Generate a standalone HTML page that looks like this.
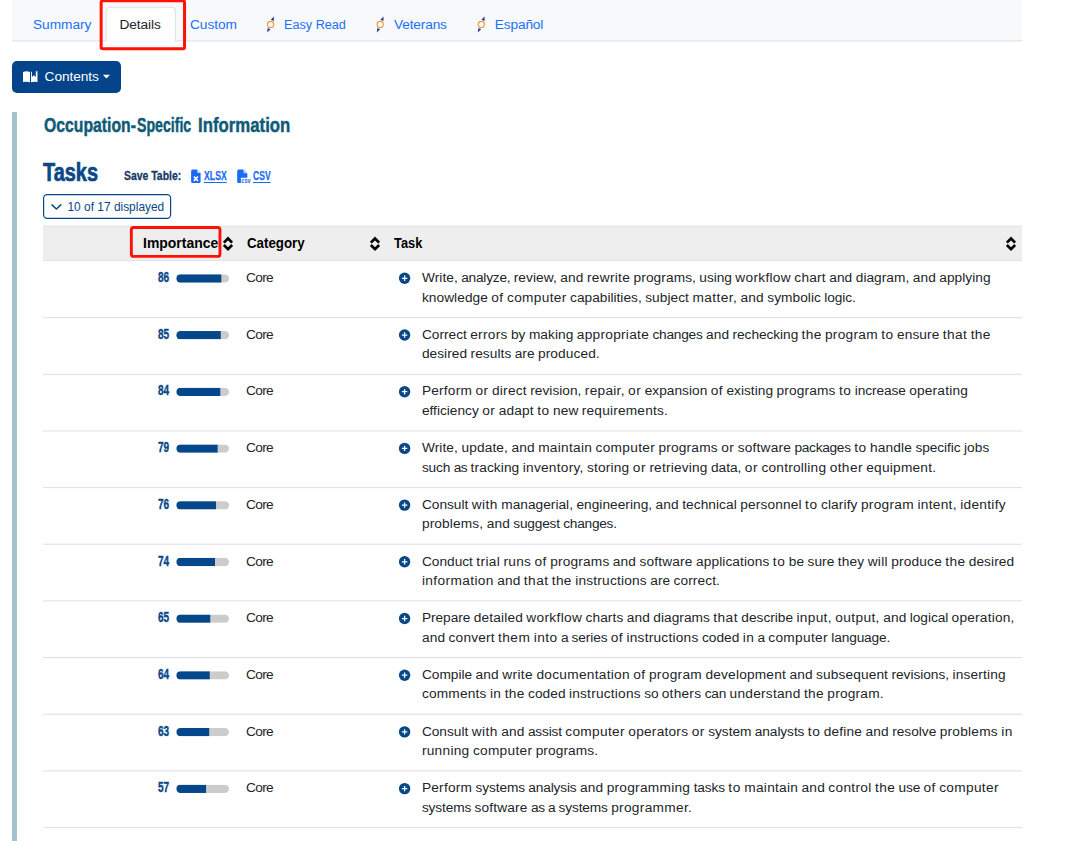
<!DOCTYPE html><html lang="en"><head><meta charset="utf-8"><title>Tasks</title><style>
*{box-sizing:border-box}
html,body{margin:0;padding:0;background:#fff}
h2,h3{margin:0;font-size:inherit;font-weight:inherit}
a{text-decoration:none}
body{width:1076px;height:841px;position:relative;overflow:hidden;font-family:"Liberation Sans",sans-serif;font-size:13.7px;color:#212529}
.abs{position:absolute;white-space:nowrap}
#tabbar{left:12px;top:0;width:1010px;height:41px;background:#f8f9fa}
.tab{top:16px;line-height:18px;color:#1a70fb}
#contents{left:12px;top:61px;width:109px;height:32px;background:#03448a;border-radius:5px}
#leftbar{left:12px;top:112px;width:5px;height:729px;background:#a3c3ce}
.cond{font-weight:bold;transform-origin:0 50%}
.h1{-webkit-text-stroke:.45px #0f5a77}
#h2{-webkit-text-stroke:.7px #084887}
#st{-webkit-text-stroke:.3px #173865}
#xl,#cs{-webkit-text-stroke:.25px #1b6af7}
.num{-webkit-text-stroke:.4px #084887}
#thead{left:43px;top:226px;width:979px;height:35px;background:#eeeeee}
.th{top:235px;font-weight:bold;font-size:14.3px;line-height:17px;color:#000;transform-origin:0 50%}
.num{font-weight:bold;color:#084887;font-size:14.3px;line-height:19px}
.task,.core{line-height:19px}
.task{height:19px}
.w{display:inline-block;white-space:pre;vertical-align:top;height:19px}
</style></head><body>
<div id="tabbar" class="abs"></div>
<svg class="abs" style="left:0;top:0" width="1076" height="56" viewBox="0 0 1076 56"><rect x="12" y="40.4" width="1010" height="1.1" fill="#dee2e6"/><path d="M106.1 41.6 V11.6 Q106.1 7.3 110.4 7.3 H171.1 Q175.4 7.3 175.4 11.6 V41.6 Z" fill="#ffffff"/><path d="M106.1 41 V11.6 Q106.1 7.3 110.4 7.3 H171.1 Q175.4 7.3 175.4 11.6 V41" fill="none" stroke="#dee2e6" stroke-width="1.1"/><rect x="101.15" y="0.8" width="83.4" height="47.9" rx="1.8" fill="none" stroke="#fe1206" stroke-width="3"/></svg>
<a class="abs tab" id="t1" style="left:33.00px;letter-spacing:-0.0193px">Summary</a>
<a class="abs tab" id="t2" style="left:119.50px;color:#212529;letter-spacing:-0.0990px">Details</a>
<a class="abs tab" id="t3" style="left:190.00px;letter-spacing:-0.0512px">Custom</a>
<svg class="abs" style="left:263px;top:14px" width="15" height="20" viewBox="0 0 15 20"><g transform="translate(0.60 0)"><path d="M10.25 2.4 L7.2 5.7 L10.35 7.1 Z" fill="#2a3e8c"/><path d="M3.55 18.4 L4.1 13.9 L6.9 15.3 Z" fill="#2a3e8c"/><circle cx="7" cy="10.4" r="3.1" fill="none" stroke="#f4963f" stroke-width="1.15"/></g></svg>
<a class="abs tab" id="t4" style="left:284.38px;transform-origin:0 50%;transform:scaleX(0.9244)">Easy Read</a>
<svg class="abs" style="left:373px;top:14px" width="15" height="20" viewBox="0 0 15 20"><g transform="translate(0.20 0)"><path d="M10.25 2.4 L7.2 5.7 L10.35 7.1 Z" fill="#2a3e8c"/><path d="M3.55 18.4 L4.1 13.9 L6.9 15.3 Z" fill="#2a3e8c"/><circle cx="7" cy="10.4" r="3.1" fill="none" stroke="#f4963f" stroke-width="1.15"/></g></svg>
<a class="abs tab" id="t5" style="left:394.00px;letter-spacing:-0.1548px">Veterans</a>
<svg class="abs" style="left:474px;top:14px" width="15" height="20" viewBox="0 0 15 20"><g transform="translate(0.30 0)"><path d="M10.25 2.4 L7.2 5.7 L10.35 7.1 Z" fill="#2a3e8c"/><path d="M3.55 18.4 L4.1 13.9 L6.9 15.3 Z" fill="#2a3e8c"/><circle cx="7" cy="10.4" r="3.1" fill="none" stroke="#f4963f" stroke-width="1.15"/></g></svg>
<a class="abs tab" id="t6" style="left:494.80px;letter-spacing:-0.1538px">Español</a>
<div id="contents" class="abs"></div>
<svg class="abs" style="left:22px;top:71px" width="17" height="12" viewBox="0 0 17 12"><path d="M1 1 Q4.5 -0.3 8 0.9 V11.3 Q4.5 10.1 1 11.1 Z" fill="#fff"/><path d="M9 0.9 L9.9 0.6 V5.9 L11.85 4.2 L13.8 5.9 V0.3 H15.5 V11.1 Q12.2 10.1 9 11.3 Z" fill="#fff"/></svg>
<span class="abs" id="ctext" style="left:44.60px;top:68px;line-height:18px;color:#fff;letter-spacing:-0.0771px">Contents</span>
<svg class="abs" style="left:102px;top:74px" width="9" height="5" viewBox="0 0 9 5"><path d="M0.9 0.7 L8 0.7 L4.45 4.4 Z" fill="#fff"/></svg>
<div id="leftbar" class="abs"></div>
<h3 class="abs" id="h1" style="left:0;top:0"><span class="abs cond h1" id="h1a" style="left:43.90px;top:112px;font-size:19.4px;line-height:26px;color:#0f5a77;transform:scaleX(0.8122)">Occupation-</span><span class="abs cond h1" id="h1b" style="left:136.70px;top:112px;font-size:19.4px;line-height:26px;color:#0f5a77;transform:scaleX(0.7294)">Specific </span><span class="abs cond h1" id="h1c" style="left:197.73px;top:112px;font-size:19.4px;line-height:26px;color:#0f5a77;transform:scaleX(0.8655)">Information</span></h3>
<h2 class="abs cond" id="h2" style="left:42.90px;top:156px;font-size:26.5px;line-height:32px;color:#084887;transform:scaleX(0.7510)">Tasks</h2>
<span class="abs cond" id="st" style="left:124.20px;top:167px;font-size:13.6px;line-height:18px;color:#173865;transform:scaleX(0.7674)">Save Table:</span>
<svg class="abs" style="left:191px;top:169px" width="11" height="15" viewBox="0 0 11 15"><path d="M1.6 0.5 H5.9 L9.6 4.2 V12.4 Q9.6 13.9 8.1 13.9 H1.6 Q0.1 13.9 0.1 12.4 V2 Q0.1 0.5 1.6 0.5 Z" fill="#1b6af7"/><path d="M6.2 0.5 V3.9 H9.6 Z" fill="#b9d2fd"/><path d="M2.9 7.5 L6.9 11.9 M6.9 7.5 L2.9 11.9" stroke="#fff" stroke-width="1.6"/></svg>
<a class="abs cond" id="xl" style="left:204.20px;top:167px;font-size:13.6px;line-height:18px;color:#1b6af7;text-decoration:underline;text-underline-offset:2px;text-decoration-thickness:1.2px;transform:scaleX(0.6406)">XLSX</a>
<svg class="abs" style="left:236.5px;top:169px" width="15" height="15" viewBox="0 0 15 15"><path d="M1.7 0.5 H6.2 L10.3 4.6 V8.7 H3.9 V13.9 H1.7 Q0.2 13.9 0.2 12.4 V2 Q0.2 0.5 1.7 0.5 Z" fill="#1b6af7"/><path d="M6.5 0.5 V4.3 H10.3 Z" fill="#b9d2fd"/><text x="4.3" y="13.8" font-family="Liberation Sans, sans-serif" font-size="6.4" font-weight="bold" fill="#1b6af7" textLength="9.3" lengthAdjust="spacingAndGlyphs">csv</text></svg>
<a class="abs cond" id="cs" style="left:253.30px;top:167px;font-size:13.6px;line-height:18px;color:#1b6af7;text-decoration:underline;text-underline-offset:2px;text-decoration-thickness:1.2px;transform:scaleX(0.6312)">CSV</a>
<svg class="abs" style="left:40px;top:190px" width="140" height="34" viewBox="0 0 140 34"><rect x="3.6" y="4.7" width="127" height="23.6" rx="3.6" fill="#fff" stroke="#084887" stroke-width="1.2"/><path d="M11.95 14.9 L16.4 19.0 L20.85 14.9" fill="none" stroke="#084887" stroke-width="1.5" stroke-linecap="round" stroke-linejoin="round"/></svg>
<span class="abs" id="disp" style="left:67.50px;top:199px;font-size:11.9px;line-height:16px;color:#084887;letter-spacing:0.0114px">10 of 17 displayed</span>
<div id="thead" class="abs"></div>
<span class="abs th" id="th1" style="left:142.70px;transform:scaleX(0.9765)">Importance</span>
<svg class="abs" style="left:221.3px;top:235px" width="14" height="18" viewBox="0 0 14 18"><path d="M2.85 7.65 L7 3.5 L11.15 7.65" fill="none" stroke="#050505" stroke-width="2.75" stroke-linejoin="miter" stroke-linecap="butt"/><path d="M2.85 9.95 L7 14.1 L11.15 9.95" fill="none" stroke="#050505" stroke-width="2.75" stroke-linejoin="miter" stroke-linecap="butt"/></svg>
<span class="abs th" id="th2" style="left:246.80px;transform:scaleX(0.9304)">Category</span>
<svg class="abs" style="left:368.3px;top:235px" width="14" height="18" viewBox="0 0 14 18"><path d="M2.85 7.65 L7 3.5 L11.15 7.65" fill="none" stroke="#050505" stroke-width="2.75" stroke-linejoin="miter" stroke-linecap="butt"/><path d="M2.85 9.95 L7 14.1 L11.15 9.95" fill="none" stroke="#050505" stroke-width="2.75" stroke-linejoin="miter" stroke-linecap="butt"/></svg>
<span class="abs th" id="th3" style="left:393.70px;transform:scaleX(0.8963)">Task</span>
<svg class="abs" style="left:1003.5px;top:235px" width="14" height="18" viewBox="0 0 14 18"><path d="M2.85 7.65 L7 3.5 L11.15 7.65" fill="none" stroke="#050505" stroke-width="2.75" stroke-linejoin="miter" stroke-linecap="butt"/><path d="M2.85 9.95 L7 14.1 L11.15 9.95" fill="none" stroke="#050505" stroke-width="2.75" stroke-linejoin="miter" stroke-linecap="butt"/></svg>
<svg class="abs" style="left:0;top:220px" width="1076" height="621" viewBox="0 220 1076 621"><rect x="43" y="225.6" width="979" height="1" fill="#e3e5e7"/><rect x="43" y="260.1" width="979" height="1" fill="#dfe1e4"/><rect x="43" y="317.10" width="979" height="1.1" fill="#dee2e6"/><rect x="43" y="373.75" width="979" height="1.1" fill="#dee2e6"/><rect x="43" y="430.40" width="979" height="1.1" fill="#dee2e6"/><rect x="43" y="487.05" width="979" height="1.1" fill="#dee2e6"/><rect x="43" y="543.70" width="979" height="1.1" fill="#dee2e6"/><rect x="43" y="600.35" width="979" height="1.1" fill="#dee2e6"/><rect x="43" y="657.00" width="979" height="1.1" fill="#dee2e6"/><rect x="43" y="713.65" width="979" height="1.1" fill="#dee2e6"/><rect x="43" y="770.30" width="979" height="1.1" fill="#dee2e6"/><rect x="43" y="826.95" width="979" height="1.1" fill="#dee2e6"/><clipPath id="cp0"><rect x="176.3" y="274.35" width="52.7" height="8.3" rx="4.15"/></clipPath><g clip-path="url(#cp0)"><rect x="176.3" y="274.35" width="52.7" height="8.3" fill="#cccccc"/><rect x="176.3" y="274.35" width="45.02" height="8.3" fill="#04478a"/></g><circle cx="404.6" cy="278.30" r="5.7" fill="#084887"/><path d="M404.6 275.60 V281.00 M401.9 278.30 H407.3" stroke="#fff" stroke-width="1.25"/><clipPath id="cp1"><rect x="176.3" y="331.05" width="52.7" height="8.3" rx="4.15"/></clipPath><g clip-path="url(#cp1)"><rect x="176.3" y="331.05" width="52.7" height="8.3" fill="#cccccc"/><rect x="176.3" y="331.05" width="44.50" height="8.3" fill="#04478a"/></g><circle cx="404.6" cy="335.00" r="5.7" fill="#084887"/><path d="M404.6 332.30 V337.70 M401.9 335.00 H407.3" stroke="#fff" stroke-width="1.25"/><clipPath id="cp2"><rect x="176.3" y="387.75" width="52.7" height="8.3" rx="4.15"/></clipPath><g clip-path="url(#cp2)"><rect x="176.3" y="387.75" width="52.7" height="8.3" fill="#cccccc"/><rect x="176.3" y="387.75" width="43.97" height="8.3" fill="#04478a"/></g><circle cx="404.6" cy="391.70" r="5.7" fill="#084887"/><path d="M404.6 389.00 V394.40 M401.9 391.70 H407.3" stroke="#fff" stroke-width="1.25"/><clipPath id="cp3"><rect x="176.3" y="444.45" width="52.7" height="8.3" rx="4.15"/></clipPath><g clip-path="url(#cp3)"><rect x="176.3" y="444.45" width="52.7" height="8.3" fill="#cccccc"/><rect x="176.3" y="444.45" width="41.33" height="8.3" fill="#04478a"/></g><circle cx="404.6" cy="448.40" r="5.7" fill="#084887"/><path d="M404.6 445.70 V451.10 M401.9 448.40 H407.3" stroke="#fff" stroke-width="1.25"/><clipPath id="cp4"><rect x="176.3" y="501.15" width="52.7" height="8.3" rx="4.15"/></clipPath><g clip-path="url(#cp4)"><rect x="176.3" y="501.15" width="52.7" height="8.3" fill="#cccccc"/><rect x="176.3" y="501.15" width="39.75" height="8.3" fill="#04478a"/></g><circle cx="404.6" cy="505.10" r="5.7" fill="#084887"/><path d="M404.6 502.40 V507.80 M401.9 505.10 H407.3" stroke="#fff" stroke-width="1.25"/><clipPath id="cp5"><rect x="176.3" y="557.85" width="52.7" height="8.3" rx="4.15"/></clipPath><g clip-path="url(#cp5)"><rect x="176.3" y="557.85" width="52.7" height="8.3" fill="#cccccc"/><rect x="176.3" y="557.85" width="38.70" height="8.3" fill="#04478a"/></g><circle cx="404.6" cy="561.80" r="5.7" fill="#084887"/><path d="M404.6 559.10 V564.50 M401.9 561.80 H407.3" stroke="#fff" stroke-width="1.25"/><clipPath id="cp6"><rect x="176.3" y="614.55" width="52.7" height="8.3" rx="4.15"/></clipPath><g clip-path="url(#cp6)"><rect x="176.3" y="614.55" width="52.7" height="8.3" fill="#cccccc"/><rect x="176.3" y="614.55" width="33.96" height="8.3" fill="#04478a"/></g><circle cx="404.6" cy="618.50" r="5.7" fill="#084887"/><path d="M404.6 615.80 V621.20 M401.9 618.50 H407.3" stroke="#fff" stroke-width="1.25"/><clipPath id="cp7"><rect x="176.3" y="671.25" width="52.7" height="8.3" rx="4.15"/></clipPath><g clip-path="url(#cp7)"><rect x="176.3" y="671.25" width="52.7" height="8.3" fill="#cccccc"/><rect x="176.3" y="671.25" width="33.43" height="8.3" fill="#04478a"/></g><circle cx="404.6" cy="675.20" r="5.7" fill="#084887"/><path d="M404.6 672.50 V677.90 M401.9 675.20 H407.3" stroke="#fff" stroke-width="1.25"/><clipPath id="cp8"><rect x="176.3" y="727.95" width="52.7" height="8.3" rx="4.15"/></clipPath><g clip-path="url(#cp8)"><rect x="176.3" y="727.95" width="52.7" height="8.3" fill="#cccccc"/><rect x="176.3" y="727.95" width="32.90" height="8.3" fill="#04478a"/></g><circle cx="404.6" cy="731.90" r="5.7" fill="#084887"/><path d="M404.6 729.20 V734.60 M401.9 731.90 H407.3" stroke="#fff" stroke-width="1.25"/><clipPath id="cp9"><rect x="176.3" y="784.65" width="52.7" height="8.3" rx="4.15"/></clipPath><g clip-path="url(#cp9)"><rect x="176.3" y="784.65" width="52.7" height="8.3" fill="#cccccc"/><rect x="176.3" y="784.65" width="29.74" height="8.3" fill="#04478a"/></g><circle cx="404.6" cy="788.60" r="5.7" fill="#084887"/><path d="M404.6 785.90 V791.30 M401.9 788.60 H407.3" stroke="#fff" stroke-width="1.25"/><rect x="131.35" y="227.55" width="88.6" height="28.8" rx="2.2" fill="none" stroke="#fe1206" stroke-width="2.9"/></svg>
<span class="abs cond num" id="n0" style="left:158.40px;top:268px;transform:scaleX(0.7021)">86</span>
<span class="abs core" id="c0" style="left:246.00px;top:268px;letter-spacing:-0.6850px">Core</span>
<div class="abs task" id="a0" style="left:421.9px;top:268px"><span class="w" style="width:39.36px;letter-spacing:0.079px">Write, </span><span class="w" style="width:52.46px;letter-spacing:-0.239px">analyze, </span><span class="w" style="width:46.60px;letter-spacing:0.087px">review, </span><span class="w" style="width:26.58px;letter-spacing:0.118px">and </span><span class="w" style="width:46.69px;letter-spacing:0.318px">rewrite </span><span class="w" style="width:65.79px;letter-spacing:0.087px">programs, </span><span class="w" style="width:35.93px;letter-spacing:-0.037px">using </span><span class="w" style="width:59.09px;letter-spacing:0.307px">workflow </span><span class="w" style="width:34.82px;letter-spacing:0.200px">chart </span><span class="w" style="width:26.58px;letter-spacing:0.118px">and </span><span class="w" style="width:56.95px;letter-spacing:0.038px">diagram, </span><span class="w" style="width:26.58px;letter-spacing:0.118px">and </span><span class="w" style="width:52.35px;letter-spacing:0.043px">applying</span></div>
<div class="abs task" id="b0" style="left:421.9px;top:288px"><span class="w" style="width:69.44px;letter-spacing:0.065px">knowledge </span><span class="w" style="width:15.68px;letter-spacing:0.428px">of </span><span class="w" style="width:63.06px;letter-spacing:0.324px">computer </span><span class="w" style="width:75.09px;letter-spacing:0.012px">capabilities, </span><span class="w" style="width:47.26px;letter-spacing:0.069px">subject </span><span class="w" style="width:48.21px;letter-spacing:0.423px">matter, </span><span class="w" style="width:26.71px;letter-spacing:0.154px">and </span><span class="w" style="width:57.07px;letter-spacing:0.052px">symbolic </span><span class="w" style="width:32.30px;letter-spacing:-0.109px">logic.</span></div>
<span class="abs cond num" id="n1" style="left:158.40px;top:325px;transform:scaleX(0.7021)">85</span>
<span class="abs core" id="c1" style="left:246.00px;top:325px;letter-spacing:-0.6850px">Core</span>
<div class="abs task" id="a1" style="left:421.9px;top:325px"><span class="w" style="width:48.34px;letter-spacing:0.010px">Correct </span><span class="w" style="width:40.77px;letter-spacing:0.272px">errors </span><span class="w" style="width:17.90px;letter-spacing:0.023px">by </span><span class="w" style="width:47.94px;letter-spacing:0.071px">making </span><span class="w" style="width:75.60px;letter-spacing:0.269px">appropriate </span><span class="w" style="width:53.51px;letter-spacing:-0.233px">changes </span><span class="w" style="width:26.62px;letter-spacing:0.128px">and </span><span class="w" style="width:69.09px;letter-spacing:-0.050px">rechecking </span><span class="w" style="width:23.36px;letter-spacing:0.314px">the </span><span class="w" style="width:56.29px;letter-spacing:0.275px">program </span><span class="w" style="width:15.89px;letter-spacing:0.538px">to </span><span class="w" style="width:45.59px;letter-spacing:0.056px">ensure </span><span class="w" style="width:27.94px;letter-spacing:0.426px">that </span><span class="w" style="width:20.97px;letter-spacing:0.314px">the</span></div>
<div class="abs task" id="b1" style="left:421.9px;top:344px"><span class="w" style="width:48.63px;letter-spacing:0.050px">desired </span><span class="w" style="width:44.23px;letter-spacing:0.075px">results </span><span class="w" style="width:23.19px;letter-spacing:0.007px">are </span><span class="w" style="width:62.85px;letter-spacing:0.107px">produced.</span></div>
<span class="abs cond num" id="n2" style="left:158.40px;top:381px;transform:scaleX(0.7021)">84</span>
<span class="abs core" id="c2" style="left:246.00px;top:381px;letter-spacing:-0.6850px">Core</span>
<div class="abs task" id="a2" style="left:421.9px;top:381px"><span class="w" style="width:53.55px;letter-spacing:0.210px">Perform </span><span class="w" style="width:16.57px;letter-spacing:0.505px">or </span><span class="w" style="width:38.22px;letter-spacing:0.225px">direct </span><span class="w" style="width:54.60px;letter-spacing:0.026px">revision, </span><span class="w" style="width:43.28px;letter-spacing:0.264px">repair, </span><span class="w" style="width:16.57px;letter-spacing:0.505px">or </span><span class="w" style="width:66.14px;letter-spacing:0.038px">expansion </span><span class="w" style="width:15.63px;letter-spacing:0.409px">of </span><span class="w" style="width:50.09px;letter-spacing:0.034px">existing </span><span class="w" style="width:62.51px;letter-spacing:0.164px">programs </span><span class="w" style="width:15.89px;letter-spacing:0.539px">to </span><span class="w" style="width:54.39px;letter-spacing:-0.094px">increase </span><span class="w" style="width:59.77px;letter-spacing:0.188px">operating</span></div>
<div class="abs task" id="b2" style="left:421.9px;top:401px"><span class="w" style="width:60.33px;letter-spacing:0.014px">efficiency </span><span class="w" style="width:16.54px;letter-spacing:0.493px">or </span><span class="w" style="width:38.44px;letter-spacing:0.157px">adapt </span><span class="w" style="width:15.86px;letter-spacing:0.528px">to </span><span class="w" style="width:28.78px;letter-spacing:0.095px">new </span><span class="w" style="width:87.15px;letter-spacing:0.189px">requirements.</span></div>
<span class="abs cond num" id="n3" style="left:158.40px;top:438px;transform:scaleX(0.7021)">79</span>
<span class="abs core" id="c3" style="left:246.00px;top:438px;letter-spacing:-0.6850px">Core</span>
<div class="abs task" id="a3" style="left:421.9px;top:438px"><span class="w" style="width:39.51px;letter-spacing:0.102px">Write, </span><span class="w" style="width:50.08px;letter-spacing:0.144px">update, </span><span class="w" style="width:26.69px;letter-spacing:0.148px">and </span><span class="w" style="width:57.35px;letter-spacing:0.275px">maintain </span><span class="w" style="width:63.01px;letter-spacing:0.319px">computer </span><span class="w" style="width:62.67px;letter-spacing:0.182px">programs </span><span class="w" style="width:16.61px;letter-spacing:0.521px">or </span><span class="w" style="width:56.65px;letter-spacing:0.190px">software </span><span class="w" style="width:59.75px;letter-spacing:-0.281px">packages </span><span class="w" style="width:15.93px;letter-spacing:0.554px">to </span><span class="w" style="width:45.35px;letter-spacing:0.141px">handle </span><span class="w" style="width:48.51px;letter-spacing:-0.066px">specific </span><span class="w" style="width:26.40px;letter-spacing:0.074px">jobs</span></div>
<div class="abs task" id="b3" style="left:421.9px;top:458px"><span class="w" style="width:31.87px;letter-spacing:-0.112px">such </span><span class="w" style="width:16.86px;letter-spacing:-0.499px">as </span><span class="w" style="width:52.11px;letter-spacing:0.098px">tracking </span><span class="w" style="width:64.28px;letter-spacing:0.257px">inventory, </span><span class="w" style="width:45.83px;letter-spacing:0.192px">storing </span><span class="w" style="width:16.57px;letter-spacing:0.506px">or </span><span class="w" style="width:61.56px;letter-spacing:0.187px">retrieving </span><span class="w" style="width:33.90px;letter-spacing:0.012px">data, </span><span class="w" style="width:16.57px;letter-spacing:0.506px">or </span><span class="w" style="width:68.30px;letter-spacing:0.229px">controlling </span><span class="w" style="width:36.56px;letter-spacing:0.392px">other </span><span class="w" style="width:71.08px;letter-spacing:0.235px">equipment.</span></div>
<span class="abs cond num" id="n4" style="left:158.40px;top:495px;transform:scaleX(0.7021)">76</span>
<span class="abs core" id="c4" style="left:246.00px;top:495px;letter-spacing:-0.6850px">Core</span>
<div class="abs task" id="a4" style="left:421.9px;top:495px"><span class="w" style="width:49.80px;letter-spacing:-0.004px">Consult </span><span class="w" style="width:29.55px;letter-spacing:0.451px">with </span><span class="w" style="width:75.19px;letter-spacing:0.023px">managerial, </span><span class="w" style="width:79.11px;letter-spacing:0.031px">engineering, </span><span class="w" style="width:26.72px;letter-spacing:0.157px">and </span><span class="w" style="width:57.91px;letter-spacing:0.053px">technical </span><span class="w" style="width:64.95px;letter-spacing:0.158px">personnel </span><span class="w" style="width:15.95px;letter-spacing:0.561px">to </span><span class="w" style="width:39.87px;letter-spacing:0.103px">clarify </span><span class="w" style="width:56.50px;letter-spacing:0.303px">program </span><span class="w" style="width:42.84px;letter-spacing:0.306px">intent, </span><span class="w" style="width:46.63px;letter-spacing:0.282px">identify</span></div>
<div class="abs task" id="b4" style="left:421.9px;top:514px"><span class="w" style="width:64.80px;letter-spacing:0.145px">problems, </span><span class="w" style="width:26.61px;letter-spacing:0.127px">and </span><span class="w" style="width:49.95px;letter-spacing:-0.199px">suggest </span><span class="w" style="width:54.54px;letter-spacing:-0.253px">changes.</span></div>
<span class="abs cond num" id="n5" style="left:158.40px;top:552px;transform:scaleX(0.7021)">74</span>
<span class="abs core" id="c5" style="left:246.00px;top:552px;letter-spacing:-0.6850px">Core</span>
<div class="abs task" id="a5" style="left:421.9px;top:552px"><span class="w" style="width:54.43px;letter-spacing:0.007px">Conduct </span><span class="w" style="width:27.25px;letter-spacing:0.359px">trial </span><span class="w" style="width:30.99px;letter-spacing:0.239px">runs </span><span class="w" style="width:15.65px;letter-spacing:0.418px">of </span><span class="w" style="width:62.61px;letter-spacing:0.176px">programs </span><span class="w" style="width:26.67px;letter-spacing:0.142px">and </span><span class="w" style="width:56.60px;letter-spacing:0.184px">software </span><span class="w" style="width:76.82px;letter-spacing:0.094px">applications </span><span class="w" style="width:15.92px;letter-spacing:0.549px">to </span><span class="w" style="width:18.73px;letter-spacing:0.050px">be </span><span class="w" style="width:30.32px;letter-spacing:0.070px">sure </span><span class="w" style="width:29.95px;letter-spacing:0.171px">they </span><span class="w" style="width:23.42px;letter-spacing:0.252px">will </span><span class="w" style="width:54.20px;letter-spacing:0.191px">produce </span><span class="w" style="width:23.40px;letter-spacing:0.326px">the </span><span class="w" style="width:46.53px;letter-spacing:0.089px">desired</span></div>
<div class="abs task" id="b5" style="left:421.9px;top:571px"><span class="w" style="width:75.36px;letter-spacing:0.386px">information </span><span class="w" style="width:26.62px;letter-spacing:0.128px">and </span><span class="w" style="width:27.94px;letter-spacing:0.426px">that </span><span class="w" style="width:23.36px;letter-spacing:0.314px">the </span><span class="w" style="width:75.13px;letter-spacing:0.209px">instructions </span><span class="w" style="width:23.29px;letter-spacing:0.036px">are </span><span class="w" style="width:47.40px;letter-spacing:0.095px">correct.</span></div>
<span class="abs cond num" id="n6" style="left:158.40px;top:608px;transform:scaleX(0.7021)">65</span>
<span class="abs core" id="c6" style="left:246.00px;top:608px;letter-spacing:-0.6850px">Core</span>
<div class="abs task" id="a6" style="left:421.9px;top:608px"><span class="w" style="width:51.86px;letter-spacing:-0.034px">Prepare </span><span class="w" style="width:52.57px;letter-spacing:0.153px">detailed </span><span class="w" style="width:59.26px;letter-spacing:0.327px">workflow </span><span class="w" style="width:41.15px;letter-spacing:0.079px">charts </span><span class="w" style="width:26.66px;letter-spacing:0.141px">and </span><span class="w" style="width:59.97px;letter-spacing:0.034px">diagrams </span><span class="w" style="width:27.98px;letter-spacing:0.436px">that </span><span class="w" style="width:55.18px;letter-spacing:0.005px">describe </span><span class="w" style="width:38.75px;letter-spacing:0.312px">input, </span><span class="w" style="width:47.97px;letter-spacing:0.388px">output, </span><span class="w" style="width:26.66px;letter-spacing:0.141px">and </span><span class="w" style="width:41.76px;letter-spacing:-0.063px">logical </span><span class="w" style="width:64.00px;letter-spacing:0.211px">operation,</span></div>
<div class="abs task" id="b6" style="left:421.9px;top:628px"><span class="w" style="width:26.72px;letter-spacing:0.157px">and </span><span class="w" style="width:49.49px;letter-spacing:0.171px">convert </span><span class="w" style="width:35.57px;letter-spacing:0.433px">them </span><span class="w" style="width:27.28px;letter-spacing:0.450px">into </span><span class="w" style="width:10.68px;letter-spacing:-0.349px">a </span><span class="w" style="width:39.24px;letter-spacing:-0.113px">series </span><span class="w" style="width:15.68px;letter-spacing:0.430px">of </span><span class="w" style="width:75.41px;letter-spacing:0.231px">instructions </span><span class="w" style="width:40.92px;letter-spacing:0.044px">coded </span><span class="w" style="width:14.74px;letter-spacing:0.339px">in </span><span class="w" style="width:10.68px;letter-spacing:-0.349px">a </span><span class="w" style="width:63.08px;letter-spacing:0.327px">computer </span><span class="w" style="width:59.92px;letter-spacing:-0.135px">language.</span></div>
<span class="abs cond num" id="n7" style="left:158.40px;top:665px;transform:scaleX(0.7021)">64</span>
<span class="abs core" id="c7" style="left:246.00px;top:665px;letter-spacing:-0.6850px">Core</span>
<div class="abs task" id="a7" style="left:421.9px;top:665px"><span class="w" style="width:53.60px;letter-spacing:-0.002px">Compile </span><span class="w" style="width:26.71px;letter-spacing:0.155px">and </span><span class="w" style="width:34.21px;letter-spacing:0.381px">write </span><span class="w" style="width:96.89px;letter-spacing:0.284px">documentation </span><span class="w" style="width:15.68px;letter-spacing:0.429px">of </span><span class="w" style="width:56.48px;letter-spacing:0.302px">program </span><span class="w" style="width:83.99px;letter-spacing:0.200px">development </span><span class="w" style="width:26.71px;letter-spacing:0.155px">and </span><span class="w" style="width:75.34px;letter-spacing:0.116px">subsequent </span><span class="w" style="width:61.01px;letter-spacing:-0.020px">revisions, </span><span class="w" style="width:54.37px;letter-spacing:0.180px">inserting</span></div>
<div class="abs task" id="b7" style="left:421.9px;top:684px"><span class="w" style="width:68.02px;letter-spacing:0.185px">comments </span><span class="w" style="width:14.72px;letter-spacing:0.335px">in </span><span class="w" style="width:23.43px;letter-spacing:0.333px">the </span><span class="w" style="width:40.89px;letter-spacing:0.038px">coded </span><span class="w" style="width:75.35px;letter-spacing:0.226px">instructions </span><span class="w" style="width:17.50px;letter-spacing:-0.183px">so </span><span class="w" style="width:42.88px;letter-spacing:0.239px">others </span><span class="w" style="width:24.96px;letter-spacing:-0.173px">can </span><span class="w" style="width:74.33px;letter-spacing:0.243px">understand </span><span class="w" style="width:23.43px;letter-spacing:0.333px">the </span><span class="w" style="width:57.49px;letter-spacing:0.213px">program.</span></div>
<span class="abs cond num" id="n8" style="left:158.40px;top:722px;transform:scaleX(0.7021)">63</span>
<span class="abs core" id="c8" style="left:246.00px;top:722px;letter-spacing:-0.6850px">Core</span>
<div class="abs task" id="a8" style="left:421.9px;top:722px"><span class="w" style="width:49.78px;letter-spacing:-0.007px">Consult </span><span class="w" style="width:29.54px;letter-spacing:0.448px">with </span><span class="w" style="width:26.71px;letter-spacing:0.154px">and </span><span class="w" style="width:37.35px;letter-spacing:-0.175px">assist </span><span class="w" style="width:63.05px;letter-spacing:0.324px">computer </span><span class="w" style="width:63.37px;letter-spacing:0.238px">operators </span><span class="w" style="width:16.62px;letter-spacing:0.525px">or </span><span class="w" style="width:46.56px;letter-spacing:-0.033px">system </span><span class="w" style="width:52.97px;letter-spacing:-0.081px">analysts </span><span class="w" style="width:15.94px;letter-spacing:0.559px">to </span><span class="w" style="width:41.84px;letter-spacing:0.190px">define </span><span class="w" style="width:26.71px;letter-spacing:0.154px">and </span><span class="w" style="width:47.40px;letter-spacing:-0.018px">resolve </span><span class="w" style="width:61.64px;letter-spacing:0.243px">problems </span><span class="w" style="width:12.33px;letter-spacing:0.337px">in</span></div>
<div class="abs task" id="b8" style="left:421.9px;top:741px"><span class="w" style="width:51.01px;letter-spacing:0.280px">running </span><span class="w" style="width:62.75px;letter-spacing:0.287px">computer </span><span class="w" style="width:63.44px;letter-spacing:0.091px">programs.</span></div>
<span class="abs cond num" id="n9" style="left:158.40px;top:778px;transform:scaleX(0.7021)">57</span>
<span class="abs core" id="c9" style="left:246.00px;top:778px;letter-spacing:-0.6850px">Core</span>
<div class="abs task" id="a9" style="left:421.9px;top:778px"><span class="w" style="width:53.70px;letter-spacing:0.231px">Perform </span><span class="w" style="width:52.79px;letter-spacing:-0.116px">systems </span><span class="w" style="width:51.60px;letter-spacing:-0.157px">analysis </span><span class="w" style="width:26.70px;letter-spacing:0.152px">and </span><span class="w" style="width:87.01px;letter-spacing:0.270px">programming </span><span class="w" style="width:34.68px;letter-spacing:-0.135px">tasks </span><span class="w" style="width:15.94px;letter-spacing:0.557px">to </span><span class="w" style="width:57.37px;letter-spacing:0.278px">maintain </span><span class="w" style="width:26.70px;letter-spacing:0.152px">and </span><span class="w" style="width:46.75px;letter-spacing:0.322px">control </span><span class="w" style="width:23.44px;letter-spacing:0.335px">the </span><span class="w" style="width:25.01px;letter-spacing:-0.157px">use </span><span class="w" style="width:15.67px;letter-spacing:0.427px">of </span><span class="w" style="width:60.64px;letter-spacing:0.322px">computer</span></div>
<div class="abs task" id="b9" style="left:421.9px;top:798px"><span class="w" style="width:52.64px;letter-spacing:-0.136px">systems </span><span class="w" style="width:56.52px;letter-spacing:0.175px">software </span><span class="w" style="width:16.86px;letter-spacing:-0.499px">as </span><span class="w" style="width:10.64px;letter-spacing:-0.373px">a </span><span class="w" style="width:52.64px;letter-spacing:-0.136px">systems </span><span class="w" style="width:82.08px;letter-spacing:0.317px">programmer.</span></div>
</body></html>
